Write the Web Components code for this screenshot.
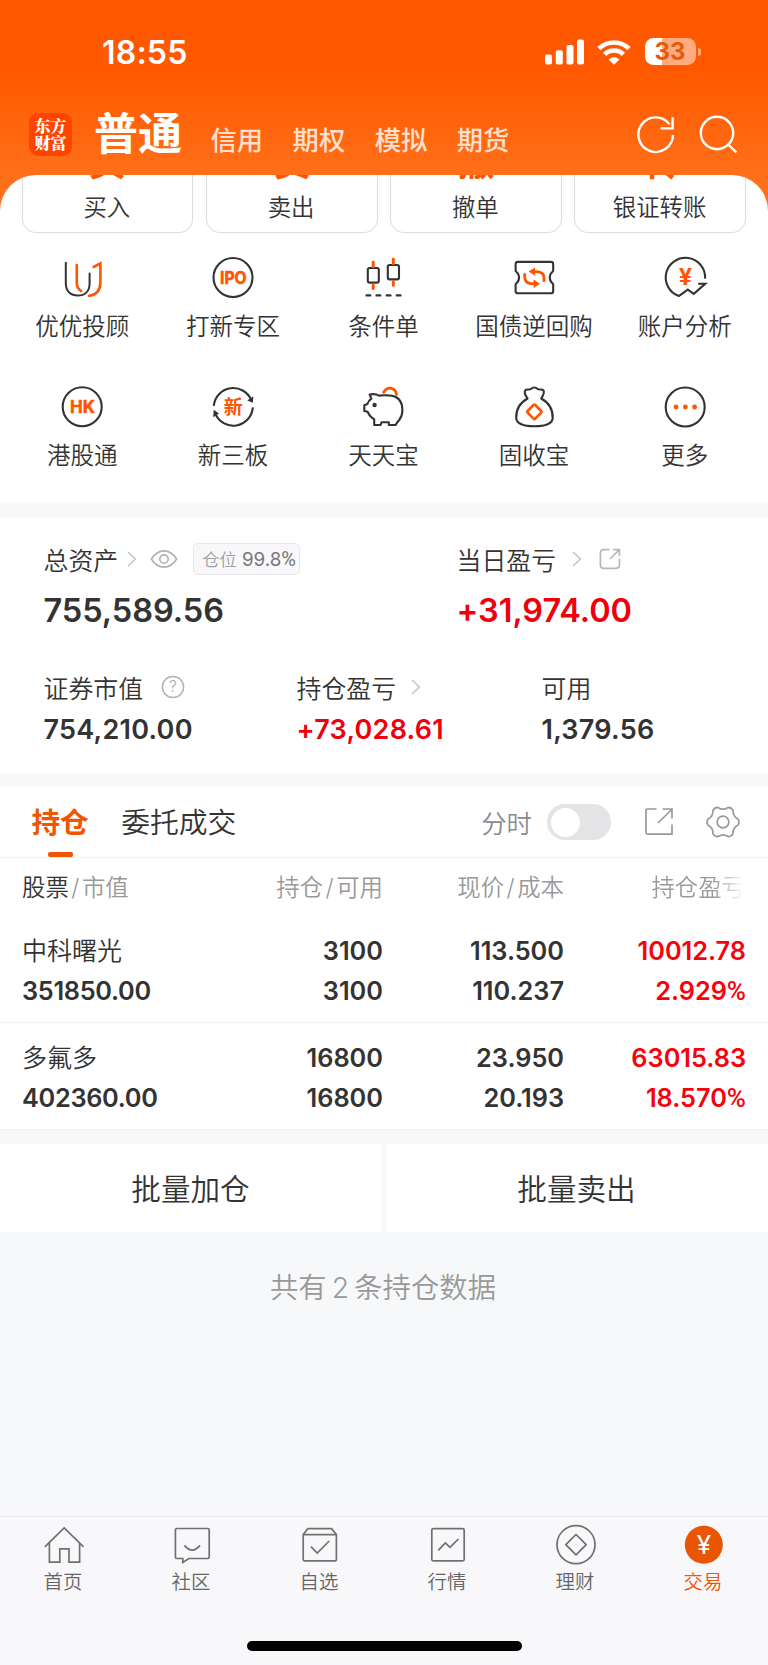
<!DOCTYPE html>
<html lang="zh-CN">
<head>
<meta charset="utf-8">
<title>交易</title>
<style>
  body {
    margin: 0;
    width: 768px;
    font-family: Inter, "Noto Sans CJK SC", sans-serif;
    color: #333;
    background: #f7f8fa;
    -webkit-font-smoothing: antialiased;
  }
</style>
</head>
<body>
<trade-app></trade-app>

<script>
const INK = "#333";
const ORANGE = "#ff5500";

// Six rounded teeth around a centre point
function gearPath(cx, cy, tip, valley) {
  const at = (deg, r) => {
    const a = (deg * Math.PI) / 180;
    return `${(cx + r * Math.cos(a)).toFixed(2)} ${(cy + r * Math.sin(a)).toFixed(2)}`;
  };
  let d = "";
  for (let k = 0; k < 6; k++) {
    const a = k * 60;
    d += `${k ? "L" : "M"}${at(a - 11, tip - 0.6)}Q${at(a, tip + 0.8)} ${at(a + 11, tip - 0.6)}`;
    d += `Q${at(a + 30, valley - 1.7)} ${at(a + 49, tip - 0.6)}`;
  }
  return d + "Z";
}

const ICONS = {
  signal: [39, 26, `<g fill="#fff"><rect y="15.5" width="7" height="10" rx="2"/><rect x="10.8" y="11.3" width="7" height="14.2" rx="2"/><rect x="21.5" y="6" width="7" height="19.5" rx="2"/><rect x="32" y=".5" width="7" height="25" rx="2"/></g>`],
  wifi: [36, 26, `<path d="M3 9.6A21.5 21.5 0 0 1 33 9.6M8.6 15.3A13.5 13.5 0 0 1 27.4 15.3" fill="none" stroke="#fff" stroke-width="4.6"/><path d="M18 25.8L12.6 20.4A8 8 0 0 1 23.4 20.4Z" fill="#fff"/>`],
  refresh: [40, 40, `<g fill="none" stroke="#fff" stroke-width="2.4"><path d="M37 21A17.3 17.3 0 1 1 33.6 10.4"/><path d="M36.6 3.2V14.4H24.6"/></g>`],
  search: [40, 40, `<g fill="none" stroke="#fff" stroke-width="2.4"><circle cx="18" cy="19" r="16.2"/><path d="M28.6 30L37.4 38.4"/></g>`],
  advisor: [44, 44, `<g fill="none" stroke-width="2" stroke-linecap="round"><path stroke="${INK}" d="M5.8 6.7V27.5C5.8 35.5 11 39.6 17.8 39.6S29.6 35.5 29.6 27.5V17.6"/><path stroke="${ORANGE}" stroke-width="2.6" d="M16.8 9V27Q16.8 32 21 35M33.6 11L40.4 7.4V26Q40.4 38.5 29 39.9"/></g>`],
  ipo: [44, 44, `<circle cx="22" cy="21.5" r="19.5" fill="none" stroke="${INK}" stroke-width="2.1"/><text x="22.3" y="27.6" text-anchor="middle" font-size="17" font-weight="700" fill="${ORANGE}" stroke="${ORANGE}" stroke-width=".6" stroke-linejoin="round" textLength="26.5" lengthAdjust="spacingAndGlyphs">IPO</text>`],
  condition: [44, 44, `<g fill="none" stroke="${INK}" stroke-width="2.1"><rect x="6.8" y="12" width="11" height="14.6" rx="1.8"/><rect x="26.8" y="9" width="11.2" height="14.4" rx="1.8"/><path stroke-width="2.4" stroke-linecap="round" d="M5.6 39.4H9.2M15.6 39.4H19.2M25.8 39.4H29.4M35.8 39.4H39.4"/></g><path stroke="${ORANGE}" stroke-width="3" stroke-linecap="round" d="M12.2 6V10.4M12.2 28.6V32.6M32.3 3V7.4M32.3 25.4V29.2"/>`],
  bond: [44, 44, `<path d="M6 5.9H38.8Q41.2 5.9 41.2 8.3V14.3Q41.2 15.4 40.3 16Q37.8 18 37.8 21.6T40.3 27.2Q41.2 27.8 41.2 28.9V34.9Q41.2 37.3 38.8 37.3H6Q3.6 37.3 3.6 34.9V28.9Q3.6 27.8 4.5 27.2Q7 25.2 7 21.6T4.5 16Q3.6 15.4 3.6 14.3V8.3Q3.6 5.9 6 5.9Z" fill="none" stroke="${INK}" stroke-width="2.1"/><g fill="none" stroke="${ORANGE}" stroke-width="2.8" stroke-linecap="round"><path d="M21 15.6H25Q32 16 32 22V24.8M23.6 27.7H19.7Q12.7 27.3 12.7 21.3V18.4"/></g><path fill="${ORANGE}" d="M16.6 15.6L23 11.4V19.8ZM28 27.7L21.6 23.5V31.9Z"/>`],
  account: [44, 44, `<path d="M42.1 22.6A19.7 19.7 0 1 0 15.8 40L24.8 33.6L30.8 37.8L42.2 27.8H35.2" fill="none" stroke="${INK}" stroke-width="2.1"/><text x="22.5" y="29.2" text-anchor="middle" font-size="23.5" font-weight="700" fill="${ORANGE}">¥</text>`],
  hk: [44, 44, `<circle cx="22.2" cy="21.8" r="19.5" fill="none" stroke="${INK}" stroke-width="2.1"/><text x="22.5" y="27.8" text-anchor="middle" font-size="17" font-weight="700" fill="${ORANGE}" stroke="${ORANGE}" stroke-width=".5" stroke-linejoin="round" textLength="25" lengthAdjust="spacingAndGlyphs">HK</text>`],
  neeq: [44, 44, `<g fill="none" stroke="${INK}" stroke-width="2.1"><path d="M2.8 20.8A19.5 19.5 0 0 1 40.2 15"/><path d="M41.8 22.4A19.5 19.5 0 0 1 4.2 28.4"/></g><path fill="${INK}" d="M42.3 11.2L41.9 17.8L36.2 15.4ZM2.2 32.3L2.7 24.7L8 28.6Z"/><text x="22.2" y="28.7" text-anchor="middle" font-size="19" font-weight="700" fill="${ORANGE}">新</text>`],
  piggy: [44, 44, `<path d="M18 10.6Q14.4 8.4 8.6 9.5L10.4 13.6Q7.6 15.5 6.4 19L3.3 20.3V26L6.6 26.8Q9 32.2 13.2 34.2V40H19.6L20.6 37.2H27.8V40H34.6Q36 37.5 38.2 35Q41.4 31 41.4 25.5Q41.4 11 27.5 10.4Q22 10 18 10.6Z" fill="none" stroke="${INK}" stroke-width="2.1" stroke-linejoin="round"/><circle cx="13.6" cy="20" r="2.2" fill="${INK}"/><path d="M22.6 7.4Q25 3.2 29.2 3.2Q34.6 3.6 35.6 9.4" fill="none" stroke="${ORANGE}" stroke-width="2.8" stroke-linecap="round"/>`],
  moneybag: [44, 44, `<path d="M15.6 13.5C13.5 10.5 11.5 7.5 13.3 5.3C15 3.5 17 5.2 18.6 4.2C20.8 2.2 23.8 2.2 26 4.2C27.6 5.2 29.6 3.5 31.4 5.3C33 7.5 31 10.5 29.2 13.5M15.6 13.5C7.5 18 3.9 25 4.2 33.2C4.8 40 13 41.3 22.4 41.3S40.2 40 40.7 33.2C41 25 37.4 18 29.2 13.5" fill="none" stroke="${INK}" stroke-width="2.1" stroke-linecap="round"/><rect x="17" y="21.4" width="10.8" height="10.8" rx="1.2" transform="rotate(45 22.4 26.8)" fill="none" stroke="${ORANGE}" stroke-width="2.7"/>`],
  more: [44, 44, `<circle cx="22.2" cy="22" r="19.5" fill="none" stroke="${INK}" stroke-width="2.1"/><g fill="${ORANGE}"><circle cx="13" cy="22" r="2.4"/><circle cx="22.4" cy="22" r="2.4"/><circle cx="31.6" cy="22" r="2.4"/></g>`],
  chevron: [12, 18, `<path d="M2 2L9.4 9L2 16" fill="none" stroke="#c4c4c4" stroke-width="1.5"/>`],
  eye: [28, 20, `<g fill="none" stroke="#b3b3b3" stroke-width="1.7"><path d="M1.4 10Q6.5 1.8 14 1.8T26.6 10Q21.5 18.2 14 18.2T1.4 10Z"/><circle cx="14" cy="10" r="4.2"/></g>`],
  help: [24, 24, `<circle cx="12" cy="12" r="10.6" fill="none" stroke="#b3b3b3" stroke-width="1.5"/><text x="12" y="17.4" text-anchor="middle" font-size="15.5" fill="#aaa">?</text>`],
  share: [22, 22, `<path d="M10.6 1.6H5Q1.4 1.6 1.4 5V16.8Q1.4 20.4 5 20.4H16.8Q20.4 20.4 20.4 16.8V10.8M11 11L19.6 2.4M14 1.6H20.4V8" fill="none" stroke="#b8b8b8" stroke-width="1.7"/>`],
  open: [30, 30, `<path d="M12.6 2H3.6Q2 2 2 3.6V25.6Q2 27.2 3.6 27.2H28V17.6M14 16L27.2 3M18.6 2H28V11.6" fill="none" stroke="#999" stroke-width="1.7"/>`],
  gear: [36, 36, `<g fill="none" stroke="#999" stroke-width="1.7" stroke-linejoin="round"><path d="${gearPath(18, 18, 16, 12.8)}"/><circle cx="18" cy="18" r="5.8"/></g>`],
  home: [44, 44, `<path d="M2.8 23.8L22.2 4.9L41.6 23.8M7.4 20V39.2H17.8V25.8H27V39.2H37.6V20"/>`],
  community: [44, 44, `<path d="M7 5.5H37.6Q39.2 5.5 39.2 7V34Q39.2 35.5 37.6 35.5H18.8L12.8 39.4V35.5H7Q5.4 35.5 5.4 34V7Q5.4 5.5 7 5.5ZM14.4 22.4Q22.2 32 30 22.4"/>`],
  watchlist: [44, 44, `<path d="M5.2 11.6L9.8 5.7H33.6L38.4 11.6V36.4Q38.4 37.9 36.9 37.9H6.7Q5.2 37.9 5.2 36.4ZM5.2 11.6H38.4M13 23.6L19.2 30L31.2 18"/>`],
  quotes: [44, 44, `<rect x="5.8" y="5.7" width="32.4" height="32.2" rx="1.6"/><path d="M12.2 27.4L19.4 20L24 24.4L32.4 16"/>`],
  wealth: [44, 44, `<circle cx="22" cy="21.7" r="19"/><path d="M22 11.5L32.2 21.7L22 31.9L11.8 21.7Z" stroke-linejoin="round"/>`],
  trade: [44, 44, `<circle cx="21.8" cy="21.7" r="19" fill="#ea5504" stroke="none"/><text x="21.8" y="31.4" text-anchor="middle" font-size="26" font-weight="400" fill="#fff" stroke="none">¥</text>`]
};

class AppIcon extends HTMLElement {
  constructor() {
    super();
    this.attachShadow({ mode: "open" });
  }

  connectedCallback() {
    const [w, h, body] = ICONS[this.getAttribute("name")];
    this.shadowRoot.innerHTML = `
      <style>
        :host { display: block; flex: none; width: ${w}px; height: ${h}px; }
        svg { display: block; overflow: visible; }
      </style>
      <svg width="${w}" height="${h}" viewBox="0 0 ${w} ${h}">${body}</svg>
    `;
  }
}

// Base for elements whose shadow root is a fixed piece of markup
class BaseElement extends HTMLElement {
  constructor() {
    super();
    this.attachShadow({ mode: "open" });
    const template = document.createElement("template");
    template.innerHTML = this.constructor.html;
    this.shadowRoot.appendChild(template.content.cloneNode(true));
  }
}

class StatusBar extends BaseElement {
  static html = `
    <style>
      :host { display: flex; align-items: center; height: 105px; box-sizing: border-box; padding: 0 67.5px 0 102px; color: #fff; }
      time { flex: 1; font-size: 32px; font-weight: 600; letter-spacing: .2px; }
      .icons { display: flex; align-items: center; gap: 12.5px; margin-top: -2px; }
      .battery { display: flex; align-items: center; gap: 2px; }
      .level {
        width: 51px; height: 27px; border-radius: 8.5px; text-align: center;
        background: linear-gradient(90deg, #fff 33%, #ffab80 33%);
        color: #e65a0a; font-size: 24px; line-height: 27px; font-weight: 700;
      }
      .nub { width: 3px; height: 8px; border-radius: 0 4px 4px 0; background: #ffab80; }
    </style>
    <time>18:55</time>
    <div class="icons">
      <app-icon name="signal"></app-icon>
      <app-icon name="wifi"></app-icon>
      <div class="battery"><div class="level">33</div><div class="nub"></div></div>
    </div>
  `;
}

class AccountNav extends BaseElement {
  static html = `
    <style>
      :host { display: flex; align-items: center; height: 58px; padding: 0 29px; color: #fff; }
      .logo {
        display: flex; align-items: center; justify-content: center; width: 43px; height: 43px;
        border-radius: 9px; background: #ff4400; text-align: center;
        font: 900 16px/17.5px "Noto Serif CJK SC", "Noto Sans CJK SC", sans-serif;
      }
      .tabs { display: flex; flex: 1; align-items: baseline; gap: 29.5px; margin-left: 22px; font-size: 26.3px; font-weight: 500; color: #ffe0cf; }
      strong { font-size: 44px; font-weight: 700; line-height: 52px; color: #fff; margin-right: -1px; }
      .tools { display: flex; gap: 23px; }
    </style>
    <div class="logo">东方<br>财富</div>
    <div class="tabs">
      <strong>普通</strong><span>信用</span><span>期权</span><span>模拟</span><span>期货</span>
    </div>
    <div class="tools">
      <app-icon name="refresh"></app-icon>
      <app-icon name="search"></app-icon>
    </div>
  `;
}

// Quick action card, scrolled so only the foot of its big mark shows
class ActionCard extends BaseElement {
  static html = `
    <style>
      :host {
        display: flex; flex-direction: column; align-items: center; height: 58px; box-sizing: border-box;
        border: 1.5px solid #dcdcdc; border-top: 0; border-radius: 0 0 14px 14px; overflow: hidden;
      }
      .mark { display: flex; align-items: flex-end; height: 7px; overflow: hidden; color: #ff5500; font-size: 37px; font-weight: 700; line-height: 38px; }
      .label { font-size: 23.4px; line-height: 34px; margin: 8.5px 1px 0 0; font-weight: 350; }
    </style>
    <div class="mark"><slot name="mark"></slot></div>
    <div class="label"><slot></slot></div>
  `;
}

class FeatureItem extends BaseElement {
  static html = `
    <style>
      :host { display: flex; flex-direction: column; align-items: center; gap: 10px; }
      .label { font-size: 23.5px; line-height: 34px; white-space: nowrap; font-weight: 350; }
    </style>
    <slot name="icon"></slot>
    <div class="label"><slot></slot></div>
  `;
}

class AssetFigure extends BaseElement {
  static html = `
    <style>
      :host { display: block; white-space: nowrap; }
      .label { display: flex; align-items: center; height: 34px; font-size: 24.9px; font-weight: 350; }
      .value { font-size: 27px; font-weight: 600; line-height: 36px; margin-top: 8px; letter-spacing: .25px; }
      :host([large]) .value { font-size: 32.5px; line-height: 40px; margin-top: 15px; letter-spacing: -.05px; }
      :host([up]) .value { color: #f0000c; }
    </style>
    <div class="label"><slot></slot></div>
    <div class="value"><slot name="value"></slot></div>
  `;
}

class AssetPanel extends BaseElement {
  static html = `
    <style>
      :host { display: grid; row-gap: 39px; box-sizing: border-box; height: 256px; padding: 25px 0 0 43.5px; background: #fff; align-content: start; }
      .top { display: grid; grid-template-columns: 413px 1fr; }
      .bottom { display: grid; grid-template-columns: 253px 245px 1fr; }
      .tag {
        box-sizing: border-box; height: 32px; width: 107px; padding: 0 0 0 8px; border: 1px solid #e8e8ec; border-radius: 5px;
        background: #f8f8fb; color: #a0a0a0; font-size: 17.4px; line-height: 31px;
      }
      .tag b { font-weight: 400; font-size: 18.8px; color: #777; }
      .tag i { font-style: normal; font-family: Roboto; font-size: 20px; }
    </style>
    <div class="top">
      <asset-figure large>总资产<app-icon name="chevron" style="margin-left:8px"></app-icon>
        <app-icon name="eye" style="margin-left:12px"></app-icon>
        <span class="tag" style="margin-left:15px">仓位 <b>99.8<i>%</i></b></span>
        <span slot="value">755,589.56</span></asset-figure>
      <asset-figure large up>当日盈亏<app-icon name="chevron" style="margin-left:15px"></app-icon>
        <app-icon name="share" style="margin-left:16px"></app-icon>
        <span slot="value">+31,974.00</span></asset-figure>
    </div>
    <div class="bottom">
      <asset-figure>证券市值<app-icon name="help" style="margin-left:18px"></app-icon><span slot="value">754,210.00</span></asset-figure>
      <asset-figure up>持仓盈亏<app-icon name="chevron" style="margin-left:14px"></app-icon><span slot="value">+73,028.61</span></asset-figure>
      <asset-figure>可用<span slot="value">1,379.56</span></asset-figure>
    </div>
  `;
}

class ToggleSwitch extends BaseElement {
  static html = `
    <style>
      :host { display: flex; align-items: center; box-sizing: border-box; width: 64px; height: 36px; padding: 0 3.5px; border-radius: 18px; background: #e4e4e6; }
      span { width: 29px; height: 29px; border-radius: 50%; background: #fff; }
    </style>
    <span></span>
  `;
}

class PositionTabs extends BaseElement {
  static html = `
    <style>
      :host { display: flex; align-items: center; box-sizing: border-box; height: 71px; padding: 0 27px 0 31.5px; border-bottom: 1px solid #f2f2f4; background: #fff; font-size: 28.8px; }
      .tab { height: 70px; line-height: 72px; font-weight: 350; }
      .active { display: flex; flex-direction: column; align-items: center; margin-right: 32.5px; color: #f05500; font-weight: 700; font-size: 28.6px; }
      .active::after { content: ""; width: 25px; height: 5px; border-radius: 2px; background: #f05500; margin-top: -7px; }
      .minute { margin-left: auto; font-size: 25.4px; color: #8a8a92; font-weight: 350; }
      toggle-switch { margin: 0 33px 0 15px; }
      .gear { margin-left: 31px; }
    </style>
    <div class="tab active">持仓</div>
    <div class="tab">委托成交</div>
    <span class="minute">分时</span>
    <toggle-switch></toggle-switch>
    <app-icon name="open"></app-icon>
    <app-icon class="gear" name="gear"></app-icon>
  `;
}

const COLUMNS = "200px 161px 181px 182px";

class PositionHead extends BaseElement {
  static html = `
    <style>
      :host { display: grid; grid-template-columns: ${COLUMNS}; height: 58px; padding: 0 22px; line-height: 59px; background: #fff; color: #999; font-size: 23.4px; font-weight: 350; text-align: right; white-space: nowrap; }
      .first { text-align: left; }
      b { font-weight: 350; color: #333; }
      i { font-style: normal; margin: 0 2.5px; }
      .fade {
        color: transparent; background: linear-gradient(90deg, #999 0 66%, #fff 99%);
        -webkit-background-clip: text; background-clip: text; justify-self: end; margin-right: 1px;
      }
    </style>
    <div class="first"><b>股票</b><i>/</i>市值</div>
    <div>持仓<i>/</i>可用</div>
    <div>现价<i>/</i>成本</div>
    <div class="fade">持仓盈亏</div>
  `;
}

class PositionRow extends HTMLElement {
  connectedCallback() {
    const get = (name) => this.getAttribute(name).replace("%", "<i>%</i>").split("|");
    const cell = ([a, b], cls = "") => `<div class="${cls}"><div>${a}</div><div>${b}</div></div>`;
    this.attachShadow({ mode: "open" }).innerHTML = `
      <style>
        :host {
          display: grid; grid-template-columns: ${COLUMNS}; box-sizing: border-box; height: 107px; padding: 15px 21.5px 0 22px;
          border-bottom: 1px solid #f2f2f4; background: #fff; font-size: 25.3px; font-weight: 600; line-height: 40px; text-align: right;
        }
        .name { text-align: left; letter-spacing: -.3px; }
        .name div:first-child { font-weight: 350; font-size: 25px; letter-spacing: 0; }
        .up { color: #f8000c; }
        i { font-style: normal; font-family: Roboto; font-weight: 500; font-size: 26px; line-height: 1; }
      </style>
      ${cell(get("stock"), "name")}${cell(get("volume"))}${cell(get("price"))}${cell(get("profit"), "up")}
    `;
  }
}

class BatchActions extends BaseElement {
  static html = `
    <style>
      :host { display: grid; grid-template-columns: 1fr 1fr; gap: 4px; height: 88px; margin-top: 14px; }
      ::slotted(*) { background: #fff; text-align: center; font-size: 29.6px; line-height: 91px; font-weight: 350; height: 88px; text-indent: -1px; }
    </style>
    <slot></slot>
  `;
}

class TabItem extends BaseElement {
  static html = `
    <style>
      :host { display: flex; flex-direction: column; align-items: center; gap: 1px; padding-top: 6px; color: #666; font-size: 19.4px; line-height: 28px; }
      :host([active]) { color: #f05500; }
      ::slotted(app-icon) { fill: none; stroke: #707070; stroke-width: 1.7px; }
      .label { margin-left: -2px; font-weight: 350; }
    </style>
    <slot name="icon"></slot>
    <div class="label"><slot></slot></div>
  `;
}

class TabBar extends BaseElement {
  static html = `
    <style>
      :host { display: flex; flex-direction: column; align-items: center; justify-content: space-between; box-sizing: border-box; height: 149px; padding-bottom: 14.5px; border-top: 1px solid #e8e8ea; background: #f8f8fb; }
      nav { display: grid; grid-template-columns: repeat(6, 1fr); width: 100%; }
      .indicator { width: 275px; height: 9.5px; border-radius: 5px; background: #000; }
    </style>
    <nav><slot></slot></nav>
    <div class="indicator"></div>
  `;
}

class TradeApp extends BaseElement {
  static html = `
    <style>
      :host { display: flex; flex-direction: column; height: 1665px; }
      header { box-sizing: border-box; height: 215px; margin-bottom: -40px; background: linear-gradient(#ff5800 0, #ff5800 70px, #ff7018 175px); }
      .sheet { box-sizing: border-box; height: 328px; border-radius: 36px 36px 0 0; background: #fff; overflow: hidden; }
      .cards { display: grid; grid-template-columns: repeat(4, 1fr); gap: 12.5px; padding: 0 22px 0 21.5px; }
      .features { display: grid; grid-template-columns: repeat(5, 1fr); row-gap: 41px; padding: 23px 8px 0 7px; }
      asset-panel { margin: 14px 0; }
      .count { margin-top: 35px; color: #999; font-size: 28.4px; line-height: 42px; text-align: center; word-spacing: -3px; margin-right: 2px; font-weight: 350; }
      tab-bar { margin-top: auto; }
    </style>
    <header>
      <status-bar></status-bar>
      <account-nav></account-nav>
    </header>
    <section class="sheet">
      <div class="cards">
        <action-card><span slot="mark">买</span>买入</action-card>
        <action-card><span slot="mark">卖</span>卖出</action-card>
        <action-card><span slot="mark">撤</span>撤单</action-card>
        <action-card><span slot="mark">转</span>银证转账</action-card>
      </div>
      <div class="features">
        <feature-item><app-icon slot="icon" name="advisor"></app-icon>优优投顾</feature-item>
        <feature-item><app-icon slot="icon" name="ipo"></app-icon>打新专区</feature-item>
        <feature-item><app-icon slot="icon" name="condition"></app-icon>条件单</feature-item>
        <feature-item><app-icon slot="icon" name="bond"></app-icon>国债逆回购</feature-item>
        <feature-item><app-icon slot="icon" name="account"></app-icon>账户分析</feature-item>
        <feature-item><app-icon slot="icon" name="hk"></app-icon>港股通</feature-item>
        <feature-item><app-icon slot="icon" name="neeq"></app-icon>新三板</feature-item>
        <feature-item><app-icon slot="icon" name="piggy"></app-icon>天天宝</feature-item>
        <feature-item><app-icon slot="icon" name="moneybag"></app-icon>固收宝</feature-item>
        <feature-item><app-icon slot="icon" name="more"></app-icon>更多</feature-item>
      </div>
    </section>
    <asset-panel></asset-panel>
    <position-tabs></position-tabs>
    <position-head></position-head>
    <position-row stock="中科曙光|351850.00" volume="3100|3100" price="113.500|110.237" profit="10012.78|2.929%"></position-row>
    <position-row stock="多氟多|402360.00" volume="16800|16800" price="23.950|20.193" profit="63015.83|18.570%"></position-row>
    <batch-actions><div>批量加仓</div><div>批量卖出</div></batch-actions>
    <div class="count">共有 2 条持仓数据</div>
    <tab-bar>
      <tab-item><app-icon slot="icon" name="home"></app-icon>首页</tab-item>
      <tab-item><app-icon slot="icon" name="community"></app-icon>社区</tab-item>
      <tab-item><app-icon slot="icon" name="watchlist"></app-icon>自选</tab-item>
      <tab-item><app-icon slot="icon" name="quotes"></app-icon>行情</tab-item>
      <tab-item><app-icon slot="icon" name="wealth"></app-icon>理财</tab-item>
      <tab-item active><app-icon slot="icon" name="trade"></app-icon>交易</tab-item>
    </tab-bar>
  `;
}

customElements.define("app-icon", AppIcon);
customElements.define("status-bar", StatusBar);
customElements.define("account-nav", AccountNav);
customElements.define("action-card", ActionCard);
customElements.define("feature-item", FeatureItem);
customElements.define("asset-figure", AssetFigure);
customElements.define("asset-panel", AssetPanel);
customElements.define("toggle-switch", ToggleSwitch);
customElements.define("position-tabs", PositionTabs);
customElements.define("position-head", PositionHead);
customElements.define("position-row", PositionRow);
customElements.define("batch-actions", BatchActions);
customElements.define("tab-item", TabItem);
customElements.define("tab-bar", TabBar);
customElements.define("trade-app", TradeApp);
</script>
</body>
</html>
